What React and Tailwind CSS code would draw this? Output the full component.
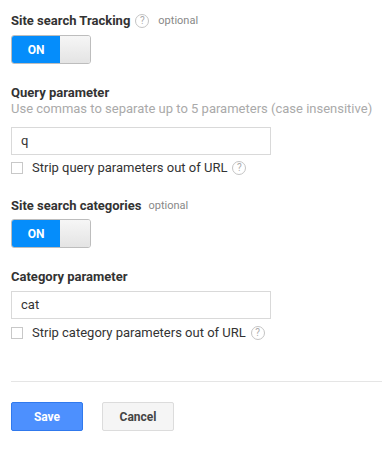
function Help() {
  return (
    <span className="inline-flex h-[14px] w-[14px] items-center justify-center rounded-full border border-[#c4c4c4] text-[10px] leading-none text-[#aaa]">
      ?
    </span>
  );
}

function Toggle() {
  return (
    <div className="flex h-[29px] w-[80px] overflow-hidden rounded-[3px] border border-[#bdbdbd]">
      <div className="flex w-[48px] items-center justify-center bg-[#058dfb] text-[12px] font-bold text-white">ON</div>
      <div className="flex-1 bg-gradient-to-b from-[#f6f6f6] to-[#e4e4e4]" />
    </div>
  );
}

function Checkbox({ label }) {
  return (
    <div className="flex h-[16px] items-center">
      <span className="h-[12px] w-[12px] border border-[#c8c8c8] bg-white" />
      <span className="ml-[9px] text-[13px] leading-[16px] text-[#333]">{label}</span>
      <span className="ml-[5px] flex">
        <Help />
      </span>
    </div>
  );
}

export default function App() {
  return (
    <div className="h-[449px] w-[382px] overflow-hidden bg-white pl-[11px] pt-[13px] font-['Roboto',sans-serif]">
      <div className="flex h-[16px] items-center gap-[5px]">
        <span className="text-[13px] font-bold leading-[16px] text-[#333]">Site search Tracking</span>
        <Help />
        <span className="ml-[4px] text-[11px] leading-[16px] text-[#888]">optional</span>
      </div>
      <div className="mt-[6px]">
        <Toggle />
      </div>

      <div className="mt-[21px] text-[13px] font-bold leading-[16px] text-[#333]">Query parameter</div>
      <div className="whitespace-nowrap text-[13px] leading-[16px] text-[#aaa]">Use commas to separate up to 5 parameters (case insensitive)</div>
      <div className="mt-[10px] flex h-[28px] w-[260px] items-center border border-[#d9d9d9] px-[9px] text-[13px] text-[#333]">q</div>
      <div className="mt-[5px]">
        <Checkbox label="Strip query parameters out of URL" />
      </div>

      <div className="mt-[22px] flex h-[16px] items-center gap-[7px]">
        <span className="text-[13px] font-bold leading-[16px] text-[#333]">Site search categories</span>
        <span className="text-[11px] leading-[16px] text-[#888]">optional</span>
      </div>
      <div className="mt-[5px]">
        <Toggle />
      </div>

      <div className="mt-[21px] text-[13px] font-bold leading-[16px] text-[#333]">Category parameter</div>
      <div className="mt-[6px] flex h-[28px] w-[260px] items-center border border-[#d9d9d9] px-[9px] text-[13px] text-[#333]">cat</div>
      <div className="mt-[6px]">
        <Checkbox label="Strip category parameters out of URL" />
      </div>

      <div className="mt-[40px] h-px bg-[#e5e5e5]" />

      <div className="mt-[20px] flex gap-[19px]">
        <button className="h-[29px] w-[72px] rounded-[2px] border border-[#3079ed] bg-[#4d90fe] text-[12px] font-bold text-white">Save</button>
        <button className="h-[29px] w-[72px] rounded-[2px] border border-[#dcdcdc] bg-[#f5f5f5] text-[12px] font-bold text-[#444]">Cancel</button>
      </div>
    </div>
  );
}
